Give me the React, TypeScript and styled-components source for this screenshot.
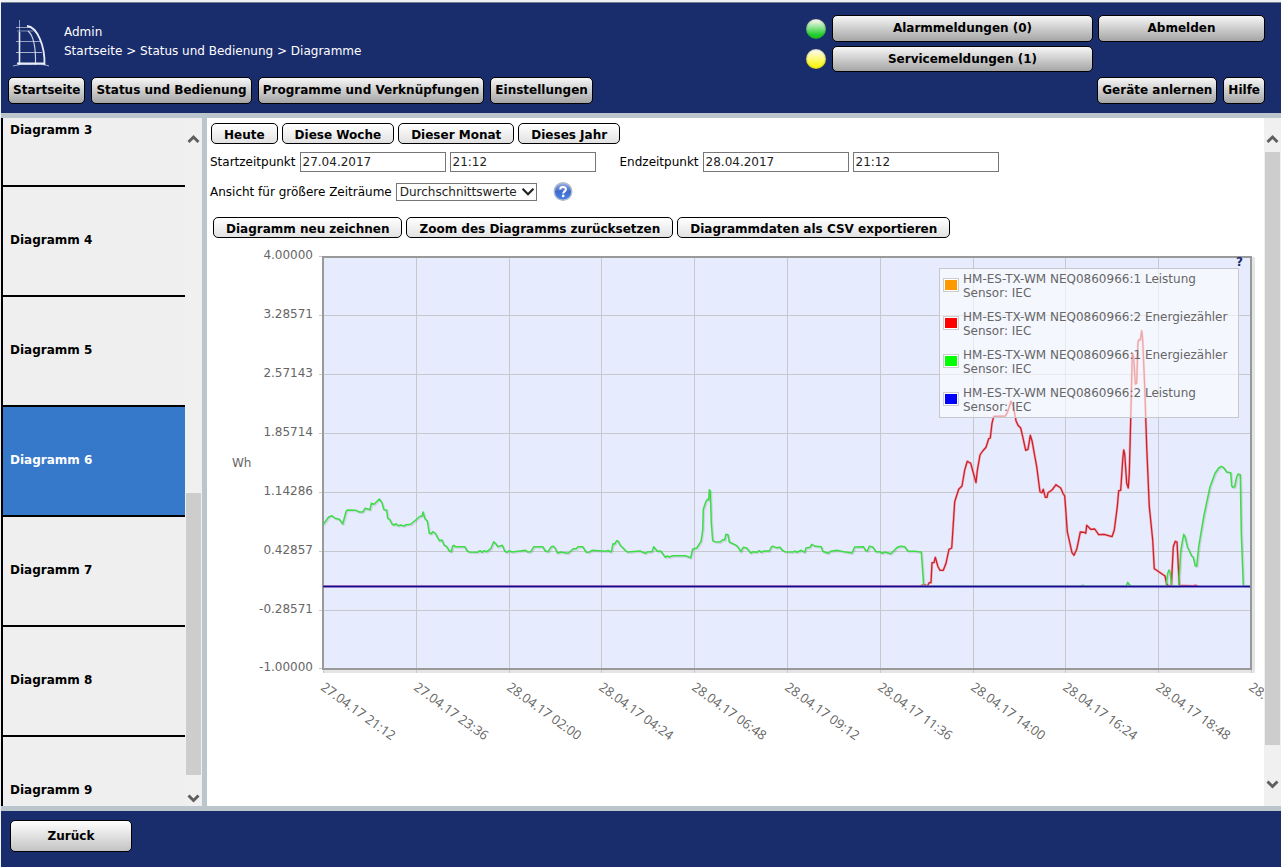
import React from "react";
import styled, { createGlobalStyle, css } from "styled-components";

const NAVY = "#192c6c";
const RULE = "#bbc6cc";

const GlobalStyle = createGlobalStyle`
  * { box-sizing: border-box; }
  body {
    margin: 0;
    background: #fff;
    color: #000;
    font: 12px/19px "DejaVu Sans", Verdana, sans-serif;
  }
  button, input, select { font-family: inherit; }
`;

const Page = styled.div`
  height: 100vh;
  display: flex;
  flex-direction: column;
  overflow: hidden;
  padding-top: 2px;
  padding-left: 1px;
  background: #eef1f5;
`;

const Header = styled.header`
  display: flex;
  flex-direction: column;
  justify-content: space-between;
  height: 116px;
  flex: none;
  padding: 12px 16px 9px 7px;
  background: ${NAVY};
  border-top: 1px solid #777c8c;
  border-bottom: 5px solid ${RULE};
`;

const HeaderTop = styled.div`
  display: flex;
  align-items: flex-start;
`;

const Logo = styled.svg`
  display: block;
  width: 40px;
  height: 48px;
  margin: 5px 0 0 3px;
`;

const Crumbs = styled.div`
  flex: 1;
  margin: 8px 0 0 13px;
  color: #fff;
  a { color: inherit; text-decoration: none; }
`;

const StatusGrid = styled.div`
  display: grid;
  grid-template-columns: 22px 261px 167px;
  grid-template-rows: 27px 26px;
  gap: 4px 5px;
  align-items: stretch;
`;

const Led = styled.span<{ $tone: string }>`
  align-self: center;
  justify-self: center;
  width: 20px;
  height: 20px;
  border-radius: 50%;
  background: linear-gradient(#fdfdf4 5%, ${(p) => p.$tone} 80%);
  box-shadow: inset 0 0 2px rgba(0, 0, 0, 0.5);
`;

const buttonBase = css`
  border: 1px solid #000;
  color: #000;
  font-size: 12px;
  font-weight: bold;
  white-space: nowrap;
`;

const BarButton = styled.button`
  ${buttonBase}
  min-height: 26px;
  padding: 0 4px;
  line-height: 25px;
  border-radius: 5px;
  background: linear-gradient(#f6f6f6, #a5a5a5);
`;

const Nav = styled.nav`
  display: flex;
  gap: 6px;
`;

const Spacer = styled.span`
  flex: 1;
`;

const Main = styled.div`
  flex: 1;
  min-height: 0;
  display: flex;
`;

const Sidebar = styled.aside`
  display: flex;
  flex: none;
  width: 206px;
  overflow: hidden;
  background: #efefef;
  border-left: 2px solid #000;
  border-right: 5px solid ${RULE};
`;

const DiagramList = styled.ul`
  flex: 1;
  margin: -41px 0 0;
  padding: 0;
  list-style: none;
`;

const DiagramItem = styled.li<{ $active: boolean }>`
  display: flex;
  align-items: center;
  height: 110px;
  border-bottom: 2px solid #000;
  background: ${(p) => (p.$active ? "#3678ca" : "#efefef")};
  a {
    padding: 0 7px 2px;
    color: ${(p) => (p.$active ? "#fff" : "#000")};
    font-weight: bold;
    text-decoration: none;
  }
`;

const Track = styled.div<{ $side?: boolean }>`
  display: flex;
  flex-direction: column;
  align-items: center;
  flex: none;
  width: 17px;
  padding: ${(p) => (p.$side ? "16px 1px 2px 0" : "16px 0")};
  background: #f0f0f0;
  svg { display: block; flex: none; width: 13px; height: 11px; }
`;

const Gap = styled.div<{ $grow: number }>`
  flex: ${(p) => p.$grow} 0 0;
`;

const Thumb = styled.div<{ $grow: number }>`
  flex: ${(p) => p.$grow} 0 0;
  width: 15px;
  background: #cdcdcd;
`;

const Content = styled.main`
  flex: 1;
  min-width: 0;
  overflow: hidden;
  padding-top: 5px;
  background: #fff;
`;

const ButtonRow = styled.div<{ $indent: number }>`
  display: flex;
  gap: 4px;
  padding-left: ${(p) => p.$indent}px;
`;

const SmallButton = styled.button`
  ${buttonBase}
  height: 21px;
  padding: 4px 12px 0;
  line-height: 15px;
  border-radius: 5px;
  background: linear-gradient(#fff, #e2e2e2);
`;

const FormRow = styled.div`
  display: flex;
  align-items: center;
  gap: 4px;
  height: 20px;
  margin-top: 8px;
  padding-left: 3px;
`;

const ViewRow = styled(FormRow)`
  margin: 10px 0 15px;
`;

const SecondField = styled.span`
  display: flex;
  align-items: center;
  gap: 4px;
  margin-left: 20px;
`;

const TextInput = styled.input`
  width: 146px;
  height: 20px;
  padding: 0 2px;
  border: 1px solid #767676;
  font-size: 12px;
  color: #222;
`;

const SelectWrap = styled.span`
  position: relative;
  display: inline-flex;
  svg {
    position: absolute;
    right: 2px;
    top: 3px;
    width: 14px;
    height: 12px;
    pointer-events: none;
  }
`;

const Select = styled.select`
  appearance: none;
  width: 141px;
  height: 18px;
  padding: 0 3px;
  border: 1px solid #767676;
  border-radius: 0;
  background: #fff;
  font-size: 12px;
  color: #222;
`;

const HelpButton = styled.button`
  width: 20px;
  height: 20px;
  margin-left: 12px;
  padding: 0;
  border: 0;
  background: none;
  svg { display: block; }
`;

const Chart = styled.svg`
  display: block;
  width: 1057px;
  height: 524px;
  font-family: "DejaVu Sans", Verdana, sans-serif;
`;

const Footer = styled.footer`
  flex: none;
  height: 61px;
  padding: 9px;
  background: ${NAVY};
  border-top: 5px solid ${RULE};
`;

const BackButton = styled.button`
  ${buttonBase}
  width: 122px;
  height: 32px;
  border-radius: 5px;
  background: linear-gradient(#fff, #c3c3c3);
`;

const UpArrow = () => (
  <svg viewBox="0 0 13 11" aria-hidden="true">
    <path d="M1.5 8 L6.5 3 L11.5 8" fill="none" stroke="#5f5f5f" strokeWidth="3" />
  </svg>
);

const DownArrow = ({ color = "#5f5f5f", weight = 3 }: { color?: string; weight?: number }) => (
  <svg viewBox="0 0 13 11" aria-hidden="true">
    <path d="M1.5 2.5 L6.5 7.5 L11.5 2.5" fill="none" stroke={color} strokeWidth={weight} />
  </svg>
);

const LogoMark = () => (
  <Logo viewBox="0 0 40 48" fill="none" stroke="#e8ecf8" aria-label="Logo" role="img">
    <path d="M8.500 0 V20" strokeWidth="1" opacity=".6" />
    <path d="M8.500 12 V45" strokeWidth="1.600" />
    <path d="M5 7.500 H20" strokeWidth="1" opacity=".6" />
    <path d="M6 11 H22" strokeWidth="1" opacity=".5" />
    <path d="M5 21.500 H30" strokeWidth="1" opacity=".6" />
    <path d="M5 32.500 H31" strokeWidth="1" opacity=".7" />
    <path d="M16 6 C26 7 34 25 33.500 45" strokeWidth="1.800" />
    <path d="M17 11 C22 15 25 24 24.500 45" strokeWidth="1.200" opacity=".85" />
    <path d="M6 43.500 H34" strokeWidth="2" />
    <path d="M2 46 Q9 43.500 19 44.500 Q31 43.500 38 46" strokeWidth="1" opacity=".7" />
  </Logo>
);

const HelpIcon = () => (
  <svg width="20" height="20" viewBox="0 0 20 20" aria-hidden="true">
    <defs>
      <linearGradient id="help" x1="0" y1="0" x2="0" y2="1">
        <stop offset="0" stopColor="#9db3e4" />
        <stop offset=".5" stopColor="#3f6bcb" />
        <stop offset="1" stopColor="#4a86ec" />
      </linearGradient>
    </defs>
    <circle cx="10" cy="9.500" r="8.800" fill="url(#help)" stroke="#b4bccd" strokeWidth="1.400" />
    <path d="M7.200 7.500 C7.200 4.300 12.900 4.300 12.900 7.400 C12.900 9.300 10.200 9.400 10.200 11.400" fill="none" stroke="#fff" strokeWidth="2" />
    <circle cx="10.200" cy="13.900" r="1.300" fill="#fff" />
  </svg>
);

const GREEN =
  "323,524.5 326,520.7 328.3,517.3 332,515.7 335,518.3 339.3,519.3 342.7,524 346,511.7 347.3,510 356,510.3 359.3,512 362.7,512 365.3,508.3 370,509.7 371.3,503.3 374,504.3 379.3,499 381.7,502.3 384,509.7 386.7,510 387.7,518.3 389.7,519.3 392,524 394,525 396,523.7 398,525.7 400.7,525 404,526 406,524.7 410.7,524.3 420,516.3 422,516.3 423,512 425,518.7 427.3,521 429.3,533.3 431.3,533.7 432.7,531.7 435.3,533.3 439.3,540.7 442,540 444,545 446.7,546.7 449.3,551 451.3,551.7 452.7,546 454,545.3 455.3,546.7 464.7,546.7 467.3,551 469.3,552 477.3,552.3 480,550.7 482,552.3 484,550.7 486.7,551.7 490.7,548.7 493.7,541.7 496,544 497.7,546.7 502.3,545.3 504.7,551 506.7,552.3 509.3,550.7 512,552 525.3,550.3 528,552 530.7,551.7 534,546.7 542.7,546.7 545.3,551 548,551.7 551.3,546.7 553.3,546.3 555.3,548.3 557.3,553 560.7,552 568,553.3 573.3,548.7 576,548.7 578,546.7 582.7,546.7 586,552 588.7,552.3 592,550.3 606,551.3 608,550.3 610.7,552 611.7,550.3 613,543.7 614.7,544 616.7,540.7 618.3,541.3 620,545 626,551 627.3,552 640,551 645.3,553.3 648,551.7 652,551.7 653.7,546.7 657.3,551.3 660.7,551 665.3,557.3 667.3,556 669.3,557 672.7,555.7 685.3,555.7 690.7,557.7 692.7,549 696.7,548 701,541.3 702.7,530 703.3,509.3 706,501.3 707.3,499.3 708.7,500 709.3,489.7 710.3,491.3 711.3,523.3 712.7,540.7 714.7,541.7 720,542 722.7,539.7 724.7,539.7 726,534.3 728,534.7 729.3,542 736.7,545.7 739.3,549 740.7,551.7 743.3,547.3 746.7,548 750.7,553 753.3,551.7 756.7,552.3 759.3,550.7 761.3,552.3 764,551 769.3,551 771.3,547 773.3,546.3 776,547.7 780,547.3 782,550 784.7,551.7 793.3,552 794.7,551 796.7,552.3 801.3,550.3 804.7,552.3 806,548 810,547.3 811.7,544.3 815.3,546.3 821.3,546.7 822.7,551.3 828,553.3 830.7,551.3 836.7,550.3 844,551.7 852,553 854.7,547 863.3,546.7 866,551 867.3,551 869.3,546.3 872.7,547 876,551.7 880,551.7 882,553.3 884.7,552 890.7,553.7 897.3,547.3 900.7,546.3 904.7,546.7 908,551.3 914.7,551.3 921.3,552 923.7,586 1080,586.3 1082.7,585.3 1085.3,586.3 1126,586.3 1127.7,582.3 1129.3,585 1132,586.3 1166,586.3 1167.7,573.3 1169,570 1170.3,573.3 1171.7,586 1178.7,586.3 1180.7,551.3 1182,543.3 1183.7,534.3 1185.3,537.3 1187.3,546.7 1191.7,556 1193.3,557.3 1195.3,566 1196.7,566 1198.7,546.7 1202,526.7 1204,515 1210,486.7 1215,473.3 1218.7,468 1221.3,466.3 1223.3,467.3 1226.7,472 1230.7,472.7 1231.7,486 1232.7,487.3 1234.7,486.7 1236.7,476.7 1238.3,474 1240.3,474.7 1241.3,533.3 1243.3,586 1250,586.3";

const RED =
  "323,586.3 920,586.3 924,584.7 927.3,586 929.3,582.7 931,582.7 932,562.7 934,562.7 935.3,557.3 938,566.7 940,570.3 943.3,570.3 946,563.3 949,549.3 951.7,548 952.7,533.3 954.7,501.7 958.7,489.3 962,486 964.7,470 967.3,461.3 970.7,463.3 976,482.7 977.3,470.7 980,455 982.7,451 986,447.3 988.7,438.7 990.3,438 992,423.3 993.7,416.3 1005.3,416 1007.3,412.7 1011,401.3 1013.3,406 1016,420.7 1018,425.3 1020.7,428 1022.7,436.7 1025.7,450.3 1028,449.3 1030.3,435.3 1032,440.7 1036.7,466.7 1040,492 1042,492.7 1043.3,489.3 1045.3,497.3 1047,497.3 1048,492.7 1052,490 1056,484.7 1060.7,488 1063.3,494 1064.7,496 1066,513.3 1067.3,531.7 1072,552.7 1074,555.3 1076.7,549.3 1078.7,540 1080.3,532 1084,532.3 1085.7,533.3 1086.7,525.3 1090.7,529.3 1094.7,529 1098.7,534.7 1104,534.3 1112,536.7 1114.3,530 1117.3,506.7 1118.7,490.7 1120.7,490.3 1122.7,460 1123.7,450 1124.7,454 1126.7,483.3 1128.3,488 1129.3,473.3 1130.7,420 1132.3,353.3 1133.7,357.3 1135.3,384 1136.7,383.3 1138,341.7 1138.7,340 1140.3,340 1141.7,330.7 1142.7,340 1144.7,386.7 1146.7,446.7 1149.3,506.7 1152.7,540 1154.3,568.7 1157.3,570.7 1165,576 1166.7,584 1168.3,586 1171.3,586 1173.3,546.7 1175.3,541.3 1177,542 1179.3,585.3 1193.3,586 1195.3,585.3 1198,586.3";

const X_TICKS = [
  { x: 323, label: "27.04.17 21:12" },
  { x: 416, label: "27.04.17 23:36" },
  { x: 509, label: "28.04.17 02:00" },
  { x: 601, label: "28.04.17 04:24" },
  { x: 694, label: "28.04.17 06:48" },
  { x: 787, label: "28.04.17 09:12" },
  { x: 880, label: "28.04.17 11:36" },
  { x: 973, label: "28.04.17 14:00" },
  { x: 1065, label: "28.04.17 16:24" },
  { x: 1158, label: "28.04.17 18:48" },
  { x: 1251, label: "28." },
];

const Y_TICKS = [
  { y: 256, label: "4.00000" },
  { y: 315, label: "3.28571" },
  { y: 374, label: "2.57143" },
  { y: 433, label: "1.85714" },
  { y: 492, label: "1.14286" },
  { y: 551, label: "0.42857" },
  { y: 610, label: "-0.28571" },
  { y: 668, label: "-1.00000" },
];

const SERIES = [
  { color: "#ff9900", name: "HM-ES-TX-WM NEQ0860966:1 Leistung" },
  { color: "#ff0000", name: "HM-ES-TX-WM NEQ0860966:2 Energiezähler" },
  { color: "#00ff00", name: "HM-ES-TX-WM NEQ0860966:1 Energiezähler" },
  { color: "#0000ff", name: "HM-ES-TX-WM NEQ0860966:2 Leistung" },
];

const EnergyChart = () => (
  <Chart viewBox="207 238 1057 524" role="img" aria-label="Energieverlauf in Wh">
    <rect x="325" y="259" width="928" height="412" fill="none" stroke="#000" strokeOpacity=".1" strokeWidth="4" />
    <rect x="323" y="257" width="928" height="412" fill="#e6ecfe" />
    {X_TICKS.map((t) => (
      <path key={t.x} d={`M${t.x + 0.5} 257 V673`} stroke="#c6c8cd" />
    ))}
    {Y_TICKS.map((t) => (
      <path key={t.y} d={`M319 ${t.y + 0.5} H1251`} stroke="#c6c8cd" />
    ))}
    <rect x="323" y="257" width="928" height="412" fill="none" stroke="#999" strokeWidth="2" />
    <g fill="none" strokeLinejoin="round">
      <g transform="translate(1 1)" stroke="#000" strokeOpacity=".1" strokeWidth="2">
        <polyline points={GREEN} />
      </g>
      <polyline points={RED} stroke="#ff8a8a" strokeOpacity=".6" strokeWidth="2.600" />
      <polyline points={RED} stroke="#c8222e" strokeWidth="1.300" />
      <polyline points={GREEN} stroke="#3fdc48" strokeWidth="1.500" />
      <path d="M323 586.500 H1250" stroke="#9b86dc" strokeWidth="3" strokeOpacity=".6" />
      <path d="M323 586.500 H1250" stroke="#130a94" strokeWidth="1.400" />
    </g>
    <rect x="939.500" y="268.500" width="299" height="149" fill="#fff" fillOpacity=".6" stroke="#c6c8cd" />
    <g fontSize="12" fill="#666">
      {SERIES.map((s, i) => (
        <g key={s.name} transform={`translate(0 ${i * 38})`}>
          <rect x="943.500" y="278.500" width="15" height="13" fill="#fff" stroke="#ccc" />
          <rect x="945" y="280" width="12" height="10" fill={s.color} />
          <text x="963" y="283">{s.name}</text>
          <text x="963" y="297">Sensor: IEC</text>
        </g>
      ))}
      {Y_TICKS.map((t) => (
        <text key={t.y} x="313" y={t.y + 3} textAnchor="end">{t.label}</text>
      ))}
      <text x="232" y="467">Wh</text>
    </g>
    <g fontSize="13" fontWeight="500" fill="#666" fontFamily="'Open Sans', sans-serif">
      {X_TICKS.map((t) => (
        <text key={t.x} transform={`translate(${t.x - 3} 689) rotate(36)`}>{t.label}</text>
      ))}
    </g>
    <text x="1236" y="266" fontSize="12" fontWeight="bold" fill={NAVY}>?</text>
  </Chart>
);

const DIAGRAMS = [3, 4, 5, 6, 7, 8, 9];
const ACTIVE = 6;

export default function App() {
  return (
    <>
      <GlobalStyle />
      <Page>
        <Header>
          <HeaderTop>
            <LogoMark />
            <Crumbs>
              <div>Admin</div>
              <div>
                <a href="#start">Startseite</a> &gt; <a href="#status">Status und Bedienung</a> &gt;{" "}
                <a href="#diagramme">Diagramme</a>
              </div>
            </Crumbs>
            <StatusGrid>
              <Led $tone="#1fcb2c" />
              <BarButton>Alarmmeldungen (0)</BarButton>
              <BarButton>Abmelden</BarButton>
              <Led $tone="#fbf822" />
              <BarButton>Servicemeldungen (1)</BarButton>
            </StatusGrid>
          </HeaderTop>
          <Nav>
            <BarButton>Startseite</BarButton>
            <BarButton>Status und Bedienung</BarButton>
            <BarButton>Programme und Verknüpfungen</BarButton>
            <BarButton>Einstellungen</BarButton>
            <Spacer />
            <BarButton>Geräte anlernen</BarButton>
            <BarButton>Hilfe</BarButton>
          </Nav>
        </Header>
        <Main>
          <Sidebar>
            <DiagramList>
              {DIAGRAMS.map((n) => (
                <DiagramItem key={n} $active={n === ACTIVE}>
                  <a href={`#diagramm-${n}`}>Diagramm {n}</a>
                </DiagramItem>
              ))}
            </DiagramList>
            <Track $side>
              <UpArrow />
              <Gap $grow={348} />
              <Thumb $grow={282} />
              <Gap $grow={18} />
              <DownArrow />
            </Track>
          </Sidebar>
          <Content>
            <ButtonRow $indent={4}>
              <SmallButton>Heute</SmallButton>
              <SmallButton>Diese Woche</SmallButton>
              <SmallButton>Dieser Monat</SmallButton>
              <SmallButton>Dieses Jahr</SmallButton>
            </ButtonRow>
            <FormRow>
              <label htmlFor="start-date">Startzeitpunkt</label>
              <TextInput id="start-date" defaultValue="27.04.2017" />
              <TextInput aria-label="Startuhrzeit" defaultValue="21:12" />
              <SecondField>
                <label htmlFor="end-date">Endzeitpunkt</label>
                <TextInput id="end-date" defaultValue="28.04.2017" />
                <TextInput aria-label="Enduhrzeit" defaultValue="21:12" />
              </SecondField>
            </FormRow>
            <ViewRow>
              <label htmlFor="view">Ansicht für größere Zeiträume</label>
              <SelectWrap>
                <Select id="view" defaultValue="avg">
                  <option value="avg">Durchschnittswerte</option>
                </Select>
                <DownArrow color="#222" weight={2} />
              </SelectWrap>
              <HelpButton aria-label="Hilfe zur Ansicht">
                <HelpIcon />
              </HelpButton>
            </ViewRow>
            <ButtonRow $indent={6}>
              <SmallButton>Diagramm neu zeichnen</SmallButton>
              <SmallButton>Zoom des Diagramms zurücksetzen</SmallButton>
              <SmallButton>Diagrammdaten als CSV exportieren</SmallButton>
            </ButtonRow>
            <EnergyChart />
          </Content>
          <Track>
            <UpArrow />
            <Gap $grow={7} />
            <Thumb $grow={593} />
            <Gap $grow={34} />
            <DownArrow />
          </Track>
        </Main>
        <Footer>
          <BackButton>Zurück</BackButton>
        </Footer>
      </Page>
    </>
  );
}
